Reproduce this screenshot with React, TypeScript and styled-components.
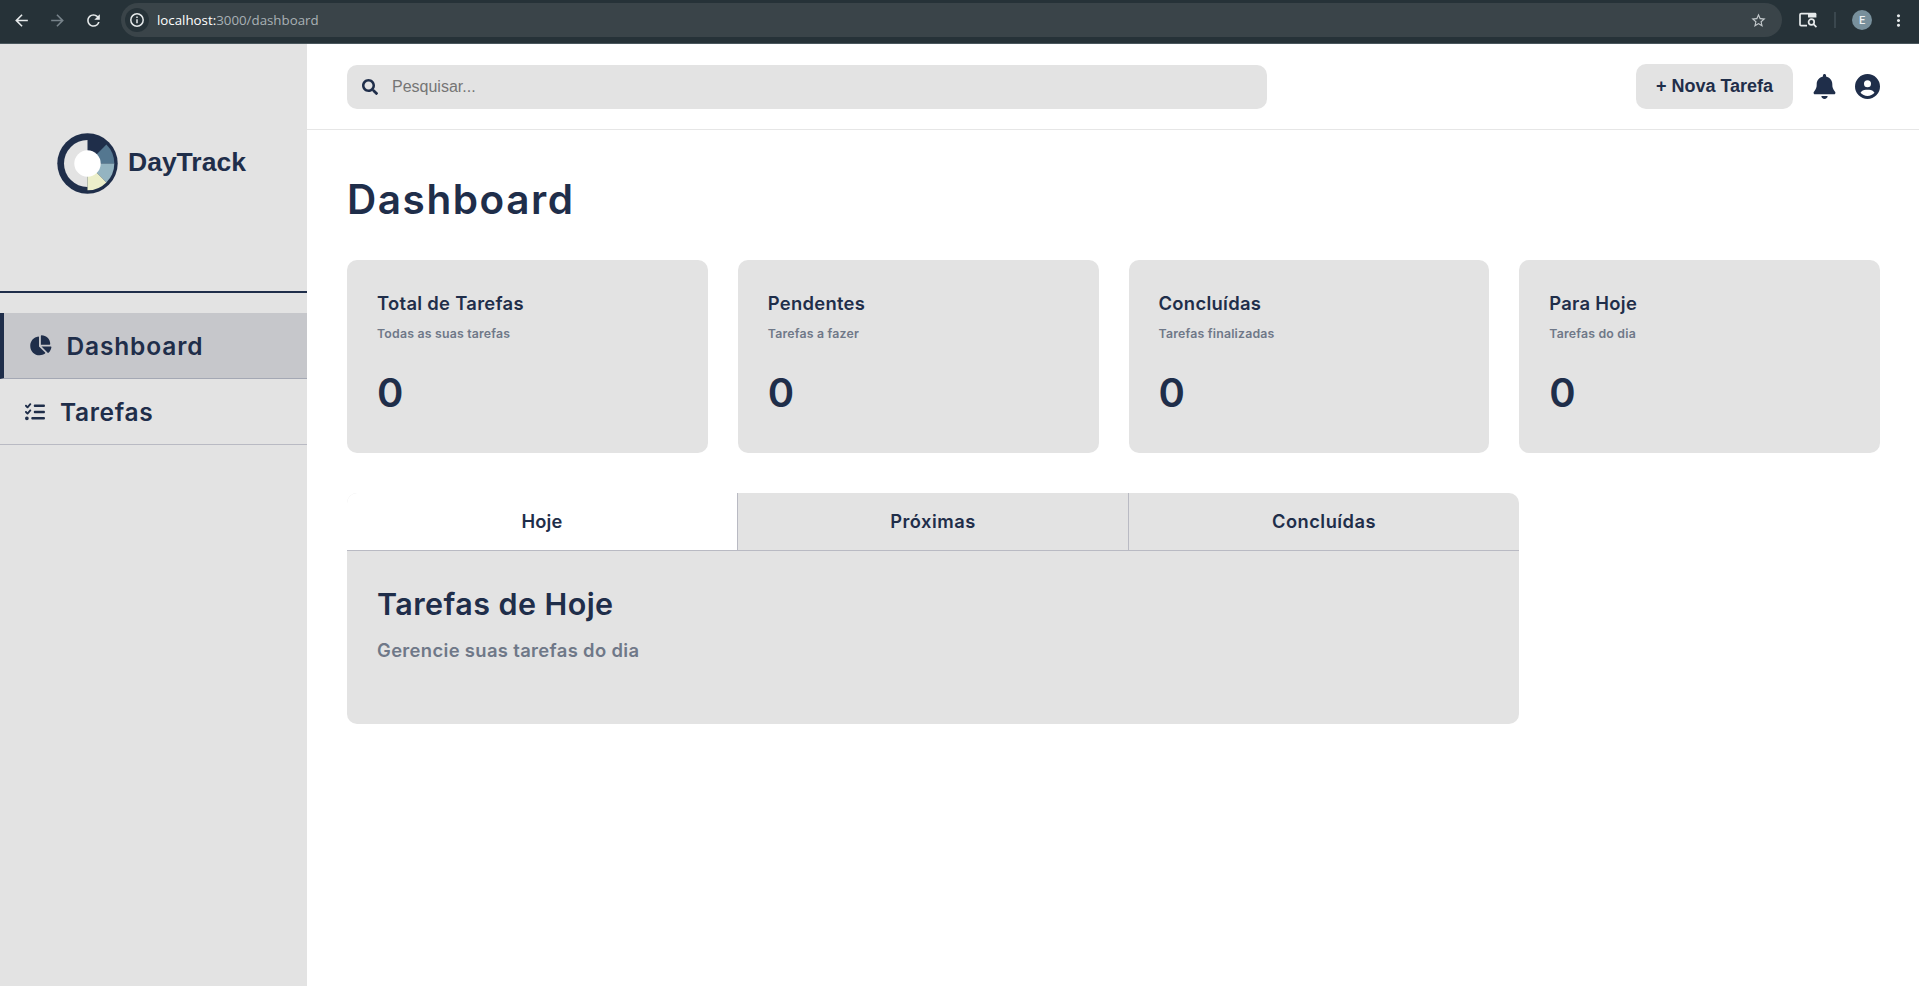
import React from 'react';
import styled, { createGlobalStyle } from 'styled-components';
import { FaSearch } from 'react-icons/fa';
import { FaBell, FaChartPie, FaCircleUser, FaListCheck } from 'react-icons/fa6';
import { MdArrowBack, MdArrowForward, MdMoreVert, MdRefresh, MdStarBorder } from 'react-icons/md';

const navy = '#1f2e4a';
const panel = '#e3e3e3';
const muted = '#6f7888';
const divider = '#b9bac3';

const GlobalStyle = createGlobalStyle`
  * { box-sizing: border-box; }
  body { margin: 0; background: #fff; color: ${navy}; font-family: Inter, "Liberation Sans", sans-serif; font-weight: 600; }
  h1, h2, h3, p { margin: 0; font-weight: 600; }
  button, input { border: 0; font: inherit; color: inherit; }
  svg { display: block; flex: none; }
`;

const Screen = styled.div`
  display: flex;
  flex-direction: column;
  height: 986px;
  overflow: hidden;
`;

/* Browser bar */
const BrowserBar = styled.div`
  display: flex;
  align-items: center;
  height: 44px;
  padding: 0 11px 3px 12px;
  background: #263238;
  border-bottom: 1px solid #4a575d;
  color: #e6eaeb;
`;
const NavIcons = styled.div`
  display: flex;
  align-items: center;
  gap: 17px;
  width: 109px;
  font-size: 19px;
`;
const Forward = styled.span`
  color: #77838a;
`;
const AddressBar = styled.div`
  display: flex;
  align-items: center;
  flex: none;
  width: 1661px;
  height: 34px;
  padding: 0 15px 0 4px;
  border-radius: 17px;
  background: #3a4449;
`;
const InfoBadge = styled.span`
  display: grid;
  place-items: center;
  width: 24px;
  height: 24px;
  margin-right: 8px;
  border-radius: 50%;
  background: #263238;
`;
const Url = styled.span`
  flex: 1;
  font: 400 13.3px/20px "Open Sans", sans-serif;
  color: #a9b1b5;
  letter-spacing: 0;
  b { font-weight: 400; color: #fff; }
`;
const Star = styled.span`
  font-size: 17px;
  color: #c3c9cc;
`;
const BarActions = styled.div`
  display: flex;
  align-items: center;
  padding-left: 17px;
`;
const BarSeparator = styled.span`
  width: 2px;
  height: 16px;
  margin: 0 16px 0 17px;
  background: #3a474e;
`;
const Avatar = styled.span`
  display: grid;
  place-items: center;
  width: 20px;
  height: 20px;
  margin-right: 17px;
  border-radius: 50%;
  background: #78909c;
  font: 500 11px "Roboto", sans-serif;
  color: #edf2f4;
`;

/* Sidebar */
const Body = styled.div`
  display: flex;
  flex: 1;
`;
const Sidebar = styled.aside`
  flex: none;
  width: 307px;
  background: ${panel};
`;
const Logo = styled.div`
  display: flex;
  align-items: center;
  gap: 10px;
  height: 249px;
  padding: 0 0 8px 57px;
  border-bottom: 2px solid ${navy};
  font: 700 26.5px/30px "Liberation Sans", Arial, sans-serif;
  span { padding-bottom: 4px; }
`;
const Menu = styled.nav`
  padding-top: 20px;
`;
const MenuItem = styled.a<{ $active?: boolean }>`
  display: flex;
  align-items: center;
  gap: 15px;
  height: 66px;
  padding-left: 25px;
  border-bottom: 1px solid ${p => (p.$active ? '#a4a8b4' : divider)};
  font-size: 24.5px;
  letter-spacing: 0.65px;
  ${p => p.$active && `border-left: 4px solid ${navy}; padding-left: 25px; background: #c6c7cb; letter-spacing: 0.85px;`}
`;

/* Main area */
const Main = styled.main`
  flex: 1;
  min-width: 0;
`;
const Header = styled.header`
  display: flex;
  align-items: center;
  height: 86px;
  padding: 0 39px 0 40px;
  border-bottom: 1px solid #e6e6e6;
  gap: 20px;
`;
const Search = styled.label`
  display: flex;
  align-items: center;
  gap: 14px;
  width: 920px;
  height: 44px;
  margin-right: auto;
  padding: 0 15px;
  border-radius: 10px;
  background: ${panel};
  input {
    flex: 1;
    padding: 0;
    outline: 0;
    background: transparent;
    font: 400 16px/20px "Liberation Sans", Arial, sans-serif;
    &::placeholder { color: #757575; }
  }
`;
const NewTask = styled.button`
  width: 157px;
  height: 45px;
  padding: 0 0 2px;
  border-radius: 10px;
  background: ${panel};
  font: 700 18px/22px "Liberation Sans", Arial, sans-serif;
`;
const BellSlot = styled.span`
  display: flex;
  justify-content: center;
  width: 22px;
`;
const Content = styled.section`
  padding: 40px 39px 0 40px;
`;
const Title = styled.h1`
  margin-bottom: 30px;
  font-size: 40.5px;
  line-height: 60px;
  letter-spacing: 1.55px;
`;
const Cards = styled.div`
  display: grid;
  grid-template-columns: repeat(4, 1fr);
  gap: 30px;
  margin-bottom: 40px;
`;
const Card = styled.article`
  height: 193px;
  padding: 30px;
  border-radius: 10px;
  background: ${panel};
`;
const CardTitle = styled.h3`
  font-size: 18.4px;
  line-height: 27px;
  letter-spacing: 0.3px;
`;
const CardNote = styled.p`
  margin: 8px 0 20px;
  font-size: 12.3px;
  line-height: 18px;
  letter-spacing: 0.2px;
  color: ${muted};
`;
const CardValue = styled.p`
  font-size: 40px;
  line-height: 59px;
`;
const TaskPanel = styled.section`
  width: 1172px;
  height: 231px;
  border-radius: 10px;
  background: ${panel};
  overflow: hidden;
`;
const Tabs = styled.div`
  display: flex;
  height: 58px;
  border-bottom: 1px solid ${divider};
`;
const Tab = styled.button<{ $active?: boolean }>`
  flex: 1;
  padding: 0;
  background: ${p => (p.$active ? '#fff' : 'transparent')};
  font-size: 18.3px;
  line-height: 27px;
  letter-spacing: ${p => (p.$active ? 0.1 : 0.5)}px;
  &:not(:last-child) { border-right: 1px solid ${divider}; }
`;
const TabContent = styled.div`
  padding: 30px;
`;
const PanelTitle = styled.h2`
  font-size: 30.5px;
  line-height: 45px;
  letter-spacing: 0.42px;
`;
const PanelNote = styled.p`
  margin-top: 11px;
  font-size: 18.4px;
  line-height: 27px;
  letter-spacing: 0.35px;
  color: ${muted};
`;

const InfoIcon = () => (
  <svg width="16" height="16" viewBox="0 0 16 16" fill="none" stroke="currentColor" strokeWidth="1.5">
    <circle cx="8" cy="8" r="6.2" />
    <path d="M8 7.2v4M8 4.6v1.5" />
  </svg>
);

const TabSearchIcon = () => (
  <svg width="18" height="16" viewBox="0 0 18 16" fill="none" stroke="currentColor" strokeWidth="1.7">
    <path d="M8 13.7H2.2a1.2 1.2 0 0 1-1.2-1.2V2.8a1.2 1.2 0 0 1 1.2-1.2H9" />
    <path d="M9 .8h7a1.4 1.4 0 0 1 1.4 1.4V5.4H9z" fill="currentColor" stroke="none" />
    <circle cx="12.4" cy="10" r="2.8" />
    <path d="M14.5 12.1l3 3" />
  </svg>
);

const LogoMark = () => (
  <svg width="61" height="61" viewBox="-30.5 -30.5 61 61">
    <circle r="30.2" fill={navy} />
    <path d="M0 -23.5A23.5 23.5 0 0 0 0 23.5Z" fill={panel} />
    <path d="M0 0L18.9 -18.9A26.8 26.8 0 0 1 26.8 0Z" fill="#547790" />
    <path d="M0 0H26.8A26.8 26.8 0 0 1 18.9 18.9Z" fill="#94b4c1" />
    <path d="M0 0L18.9 18.9A26.8 26.8 0 0 1 0 26.8Z" fill="#ecefca" />
    <circle r="13.2" fill="#fff" />
  </svg>
);

const stats = [
  { title: 'Total de Tarefas', note: 'Todas as suas tarefas', value: 0 },
  { title: 'Pendentes', note: 'Tarefas a fazer', value: 0 },
  { title: 'Concluídas', note: 'Tarefas finalizadas', value: 0 },
  { title: 'Para Hoje', note: 'Tarefas do dia', value: 0 },
];

export default function App() {
  return (
    <Screen>
      <GlobalStyle />
      <BrowserBar>
        <NavIcons>
          <MdArrowBack />
          <Forward><MdArrowForward /></Forward>
          <MdRefresh />
        </NavIcons>
        <AddressBar>
          <InfoBadge><InfoIcon /></InfoBadge>
          <Url><b>localhost:</b>3000/dashboard</Url>
          <Star><MdStarBorder /></Star>
        </AddressBar>
        <BarActions>
          <TabSearchIcon />
          <BarSeparator />
          <Avatar>E</Avatar>
          <MdMoreVert size={19} />
        </BarActions>
      </BrowserBar>
      <Body>
        <Sidebar>
          <Logo><LogoMark /><span>DayTrack</span></Logo>
          <Menu>
            <MenuItem $active><FaChartPie size={22.5} />Dashboard</MenuItem>
            <MenuItem><FaListCheck size={20} />Tarefas</MenuItem>
          </Menu>
        </Sidebar>
        <Main>
          <Header>
            <Search>
              <FaSearch size={16} />
              <input placeholder="Pesquisar..." />
            </Search>
            <NewTask>+ Nova Tarefa</NewTask>
            <BellSlot><FaBell size={25} /></BellSlot>
            <FaCircleUser size={25} />
          </Header>
          <Content>
            <Title>Dashboard</Title>
            <Cards>
              {stats.map(s => (
                <Card key={s.title}>
                  <CardTitle>{s.title}</CardTitle>
                  <CardNote>{s.note}</CardNote>
                  <CardValue>{s.value}</CardValue>
                </Card>
              ))}
            </Cards>
            <TaskPanel>
              <Tabs>
                <Tab $active>Hoje</Tab>
                <Tab>Próximas</Tab>
                <Tab>Concluídas</Tab>
              </Tabs>
              <TabContent>
                <PanelTitle>Tarefas de Hoje</PanelTitle>
                <PanelNote>Gerencie suas tarefas do dia</PanelNote>
              </TabContent>
            </TaskPanel>
          </Content>
        </Main>
      </Body>
    </Screen>
  );
}
